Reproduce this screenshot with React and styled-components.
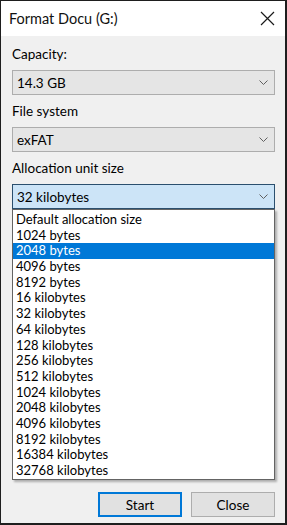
import styled, { createGlobalStyle } from 'styled-components';

const GlobalStyle = createGlobalStyle`
  html, body {
    margin: 0;
    padding: 0;
    background: #ffffff;
  }
  * {
    box-sizing: border-box;
  }
`;

const Window = styled.div`
  width: 287px;
  height: 525px;
  display: flex;
  flex-direction: column;
  background: #f0f0f0;
  border-style: solid;
  border-color: #1e1e1e;
  border-width: 1px 2px 2px 1px;
  font-family: Lato, "Noto Sans", sans-serif;
  color: #000;
`;

const TitleBar = styled.div`
  height: 35px;
  flex: none;
  display: flex;
  align-items: center;
  justify-content: space-between;
  padding: 0 10px 0 8px;
  background: #ffffff;
`;

const Title = styled.span`
  font-size: 14.5px;
  color: #111;
`;

const CloseX = styled.svg`
  width: 15px;
  height: 15px;
  display: block;
`;

const Body = styled.div`
  flex: 1;
  display: flex;
  flex-direction: column;
  padding: 9px 10px 6px 11px;
`;

const Field = styled.div`
  position: relative;
  display: flex;
  flex-direction: column;
  gap: 7px;
  margin-bottom: 7px;
`;

const Label = styled.label`
  font-size: 13.5px;
  line-height: 18px;
  height: 18px;
`;

const Select = styled.div`
  height: 25px;
  display: flex;
  align-items: center;
  justify-content: space-between;
  padding: 0 6px 0 4px;
  font-size: 13.5px;
  background: ${p => (p.open ? '#cce4f7' : '#e5e5e5')};
  border: 1px solid ${p => (p.open ? '#2b4f6e' : '#adadad')};
`;

const Chevron = styled.svg`
  width: 9px;
  height: 5px;
  display: block;
`;

const List = styled.ul`
  position: absolute;
  left: 0;
  right: 0;
  top: 100%;
  margin: 0;
  padding: 2px 0 0;
  list-style: none;
  background: #ffffff;
  border: 1px solid #646464;
  box-shadow: 2px 2px 2px rgba(0, 0, 0, 0.28);
  z-index: 2;
`;

const Item = styled.li`
  height: 15.7px;
  line-height: 15.7px;
  padding-left: 3px;
  font-size: 13px;
  white-space: nowrap;
  background: ${p => (p.selected ? '#0078d7' : 'transparent')};
  color: ${p => (p.selected ? '#ffffff' : '#000000')};
`;

const Buttons = styled.div`
  margin-top: auto;
  display: flex;
  justify-content: flex-end;
  gap: 9px;
`;

const Button = styled.button`
  width: 84px;
  height: 25px;
  font-family: inherit;
  font-size: 13.5px;
  color: #000;
  background: #e1e1e1;
  border: ${p => (p.primary ? '2px solid #0078d7' : '1px solid #adadad')};
  padding: 0;
`;

const options = [
  'Default allocation size',
  '1024 bytes',
  '2048 bytes',
  '4096 bytes',
  '8192 bytes',
  '16 kilobytes',
  '32 kilobytes',
  '64 kilobytes',
  '128 kilobytes',
  '256 kilobytes',
  '512 kilobytes',
  '1024 kilobytes',
  '2048 kilobytes',
  '4096 kilobytes',
  '8192 kilobytes',
  '16384 kilobytes',
  '32768 kilobytes',
];

function Arrow() {
  return (
    <Chevron viewBox="0 0 9 5">
      <path d="M0.5 0.5 L4.5 4.5 L8.5 0.5" fill="none" stroke="#606060" strokeWidth="1" />
    </Chevron>
  );
}

export default function App() {
  return (
    <>
      <GlobalStyle />
      <Window>
        <TitleBar>
          <Title>Format Docu (G:)</Title>
          <CloseX viewBox="0 0 15 15">
            <path d="M1 1 L14 14 M14 1 L1 14" stroke="#1a1a1a" strokeWidth="1.2" fill="none" />
          </CloseX>
        </TitleBar>
        <Body>
          <Field>
            <Label>Capacity:</Label>
            <Select>
              <span>14.3 GB</span>
              <Arrow />
            </Select>
          </Field>
          <Field>
            <Label>File system</Label>
            <Select>
              <span>exFAT</span>
              <Arrow />
            </Select>
          </Field>
          <Field>
            <Label>Allocation unit size</Label>
            <Select open>
              <span>32 kilobytes</span>
              <Arrow />
            </Select>
            <List>
              {options.map(o => (
                <Item key={o} selected={o === '2048 bytes'}>{o}</Item>
              ))}
            </List>
          </Field>
          <Buttons>
            <Button primary>Start</Button>
            <Button>Close</Button>
          </Buttons>
        </Body>
      </Window>
    </>
  );
}
